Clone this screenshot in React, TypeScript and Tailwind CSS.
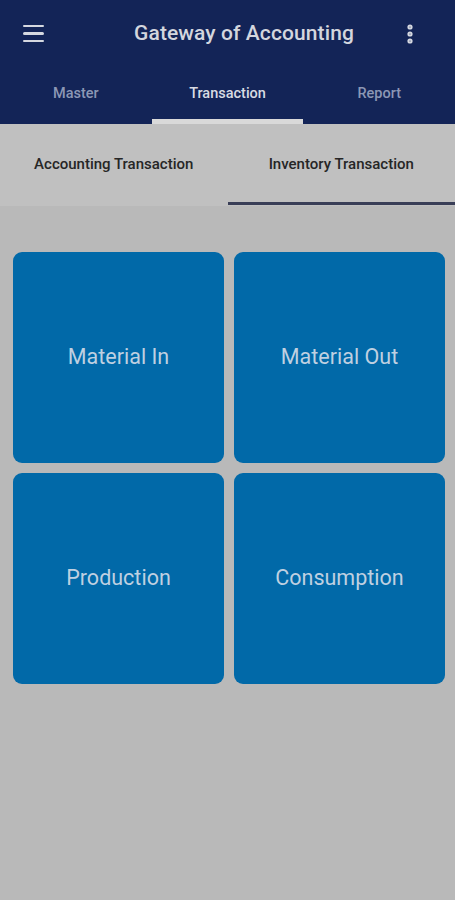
import { EllipsisVertical } from "lucide-react";

const TILES = ["Material In", "Material Out", "Production", "Consumption"];

export default function App() {
  return (
    <div
      className="w-[455px] h-[900px] bg-[#b9b9b9] flex flex-col"
      style={{ fontFamily: "Roboto, 'Liberation Sans', sans-serif" }}
    >
      {/* App bar */}
      <div className="bg-[#132457] h-[124px] flex flex-col">
        <div className="h-[67px] flex items-center pl-[23px] pr-[33px]">
          <div className="w-[21px] flex flex-col gap-[5px]">
            <span className="block h-[2.5px] bg-[#d5d8e0] rounded-sm" />
            <span className="block h-[2.5px] bg-[#d5d8e0] rounded-sm" />
            <span className="block h-[2.5px] bg-[#d5d8e0] rounded-sm" />
          </div>
          <div className="flex-1 text-center text-[21px] font-medium text-[#d3d6de] tracking-[0.1px] pl-[46px]">
            Gateway of Accounting
          </div>
          <EllipsisVertical size={24} strokeWidth={3.2} className="text-[#d5d8e0]" />
        </div>
        <div className="flex-1 flex">
          {[
            { label: "Master", active: false },
            { label: "Transaction", active: true },
            { label: "Report", active: false },
          ].map((t) => (
            <div key={t.label} className="flex-1 flex flex-col">
              <div
                className={`flex-1 flex items-center justify-center text-[14.5px] font-medium pt-[1px] ${
                  t.active ? "text-[#d8dbe3]" : "text-[#8c97b5]"
                }`}
              >
                {t.label}
              </div>
              <div className={`h-[5px] ${t.active ? "bg-[#d9d9d9]" : ""}`} />
            </div>
          ))}
        </div>
      </div>

      {/* Sub tabs */}
      <div className="bg-[#c0c0c0] h-[82px] flex">
        {[
          { label: "Accounting Transaction", active: false },
          { label: "Inventory Transaction", active: true },
        ].map((t) => (
          <div key={t.label} className="flex-1 flex flex-col">
            <div className="flex-1 flex justify-center pt-[29px] text-[15px] font-medium text-[#262626]">
              {t.label}
            </div>
            <div className={`h-[3px] mb-[1px] ${t.active ? "bg-[#393e57]" : ""}`} />
          </div>
        ))}
      </div>

      {/* Tiles */}
      <div className="grid grid-cols-2 gap-[10px] pl-[13px] pr-[10px] pt-[46px]">
        {TILES.map((label) => (
          <div
            key={label}
            className="h-[211px] rounded-[9px] bg-[#0169a8] flex items-center justify-center text-[21.5px] text-[#bfd0e1]"
          >
            {label}
          </div>
        ))}
      </div>
    </div>
  );
}
